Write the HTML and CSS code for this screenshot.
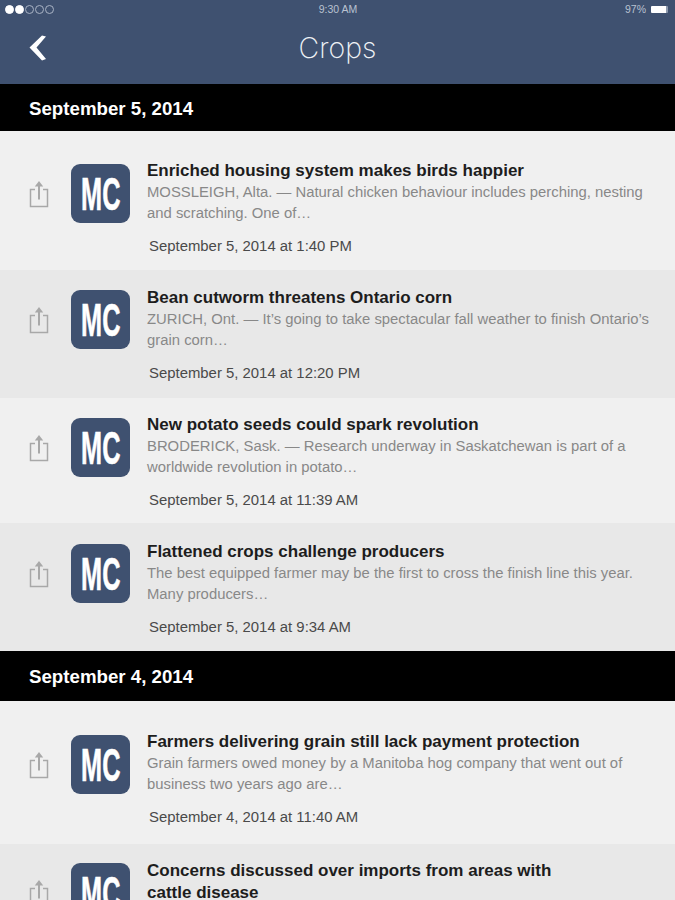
FILE: index.html
```html
<!DOCTYPE html>
<html lang="en">
<head>
    <meta charset="UTF-8">
    <meta name="viewport" content="width=device-width, initial-scale=1.0">
    <title>Crops</title>
    <link rel="stylesheet" href="styles.css">
</head>
<body>

<svg class="icon-defs" width="0" height="0">
    <symbol id="share" viewBox="0 0 20 28">
        <path d="M6 9.500H1.500v17h17v-17H14" fill="none" stroke="currentColor" stroke-width="1.500"/>
        <path d="M10 19.500V3" fill="none" stroke="currentColor" stroke-width="2"/>
        <path d="M10 1 5.800 6.500h8.400z" fill="currentColor"/>
    </symbol>
</svg>

<div class="container">
    <!-- Top bar -->
    <div class="top-bar">
        <div class="status-bar">
            <div class="signal">
                <span class="dot on"></span><span class="dot on"></span><span class="dot"></span><span class="dot"></span><span class="dot"></span>
            </div>
            <div class="clock">9:30 AM</div>
            <div class="battery-box">97% <span class="battery"></span></div>
        </div>
        <div class="nav-bar">
            <svg class="back-icon" viewBox="0 0 18 26"><path d="M.5 12.500 13 .5l4 1-9.500 11L17 24l-4 1.500z" fill="#fff"/></svg>
            <div class="nav-title">Crops</div>
        </div>
    </div>

    <!-- September 5 -->
    <div class="day-header">September 5, 2014</div>

    <div class="article first">
        <svg class="share-icon"><use href="#share"/></svg>
        <div class="logo"><span>MC</span></div>
        <div class="article-text">
            <div class="article-title">Enriched housing system makes birds happier</div>
            <div class="article-summary">MOSSLEIGH, Alta. — Natural chicken behaviour includes perching, nesting and scratching. One of…</div>
            <div class="article-date">September 5, 2014 at 1:40 PM</div>
        </div>
    </div>

    <div class="article alt">
        <svg class="share-icon"><use href="#share"/></svg>
        <div class="logo"><span>MC</span></div>
        <div class="article-text">
            <div class="article-title">Bean cutworm threatens Ontario corn</div>
            <div class="article-summary">ZURICH, Ont. — It’s going to take spectacular fall weather to finish Ontario’s grain corn…</div>
            <div class="article-date">September 5, 2014 at 12:20 PM</div>
        </div>
    </div>

    <div class="article short">
        <svg class="share-icon"><use href="#share"/></svg>
        <div class="logo"><span>MC</span></div>
        <div class="article-text">
            <div class="article-title">New potato seeds could spark revolution</div>
            <div class="article-summary">BRODERICK, Sask. — Research underway in Saskatchewan is part of a worldwide revolution in potato…</div>
            <div class="article-date">September 5, 2014 at 11:39 AM</div>
        </div>
    </div>

    <div class="article alt low">
        <svg class="share-icon"><use href="#share"/></svg>
        <div class="logo"><span>MC</span></div>
        <div class="article-text">
            <div class="article-title">Flattened crops challenge producers</div>
            <div class="article-summary">The best equipped farmer may be the first to cross the finish line this year. Many producers…</div>
            <div class="article-date">September 5, 2014 at 9:34 AM</div>
        </div>
    </div>

    <!-- September 4 -->
    <div class="day-header tall">September 4, 2014</div>

    <div class="article first tall">
        <svg class="share-icon"><use href="#share"/></svg>
        <div class="logo"><span>MC</span></div>
        <div class="article-text">
            <div class="article-title">Farmers delivering grain still lack payment protection</div>
            <div class="article-summary">Grain farmers owed money by a Manitoba hog company that went out of business two years ago are…</div>
            <div class="article-date">September 4, 2014 at 11:40 AM</div>
        </div>
    </div>

    <div class="article alt last">
        <svg class="share-icon"><use href="#share"/></svg>
        <div class="logo"><span>MC</span></div>
        <div class="article-text">
            <div class="article-title">Concerns discussed over imports from areas with cattle disease</div>
        </div>
    </div>
</div>

</body>
</html>
```

FILE: styles.css
```css
/* Global Styles */
body {
    margin: 0;
    padding: 0;
    font-family: "Liberation Sans", Arial, sans-serif;
    background-color: #e8e8e8;
    height: 900px;
    overflow: hidden;
}
.icon-defs {
    display: block;
}
.container {
    width: 675px;
    height: 900px;
    overflow: hidden;
}
/* Top Bar */
.top-bar {
    height: 84px;
    background-color: #3f5170;
    color: white;
}
.status-bar {
    height: 18px;
    padding: 0 7px 0 5px;
    display: flex;
    justify-content: space-between;
    align-items: center;
    font-size: 10.500px;
    color: #b9c2d0;
}
.signal {
    display: flex;
    gap: 1px;
    width: 100px;
}
.dot {
    width: 9px;
    height: 9px;
    box-sizing: border-box;
    border: 1px solid #a9b3c4;
    border-radius: 50%;
}
.dot.on {
    background-color: white;
    border-color: white;
}
.clock {
    margin-left: 3px;
}
.battery-box {
    width: 100px;
    display: flex;
    justify-content: flex-end;
    align-items: center;
    gap: 5px;
}
.battery {
    width: 15px;
    height: 7px;
    background-color: white;
    border-radius: 1px;
    border-right: 2px solid #8d99ad;
}
.nav-bar {
    height: 66px;
    position: relative;
    display: flex;
    justify-content: center;
    align-items: center;
}
.back-icon {
    position: absolute;
    left: 29px;
    top: 17px;
    width: 18px;
    height: 26px;
}
.nav-title {
    font-family: "Inter", sans-serif;
    font-weight: 200;
    font-size: 28.500px;
    color: #eef1f6;
    margin-top: -8px;
}
/* Day Headers */
.day-header {
    height: 47px;
    line-height: 50px;
    padding-left: 29px;
    background-color: black;
    color: white;
    font-size: 18.700px;
    font-weight: bold;
}
.day-header.tall {
    height: 50px;
    line-height: 51px;
}
/* Article Rows */
.article {
    height: 128px;
    box-sizing: border-box;
    padding-top: 20px;
    display: flex;
    align-items: flex-start;
    background-color: #f0f0f0;
}
.article.alt {
    background-color: #e8e8e8;
}
.article.short {
    height: 125px;
}
.article.low {
    padding-top: 21px;
}
.article.first {
    height: 139px;
    padding-top: 33px;
}
.article.first.tall {
    height: 143px;
    padding-top: 34px;
}
.article.last {
    padding-top: 19px;
}
.share-icon {
    width: 20px;
    height: 28px;
    margin: 16px 0 0 29px;
    color: #a8a8a8;
    flex-shrink: 0;
}
.logo {
    width: 59px;
    height: 59px;
    margin: 0 17px 0 22px;
    flex-shrink: 0;
    background-color: #3f5170;
    border-radius: 9px;
    color: white;
    display: flex;
    justify-content: center;
    align-items: center;
    font-size: 46px;
    font-weight: bold;
}
.logo span {
    display: block;
    transform: scaleX(0.55);
    -webkit-text-stroke: 0.6px white;
}
.article-text {
    width: 508px;
    margin-top: -4px;
}
.article.alt .article-text {
    margin-top: -3px;
}
.article-title {
    max-width: 445px;
    color: #1d1d1d;
    font-size: 17px;
    font-weight: bold;
    line-height: 22px;
}
.article-summary {
    color: #888;
    font-size: 14.850px;
    line-height: 21px;
}
.article-date {
    margin: 12px 0 0 2px;
    color: #4a4a4a;
    font-size: 14.900px;
    line-height: 20px;
}
```
